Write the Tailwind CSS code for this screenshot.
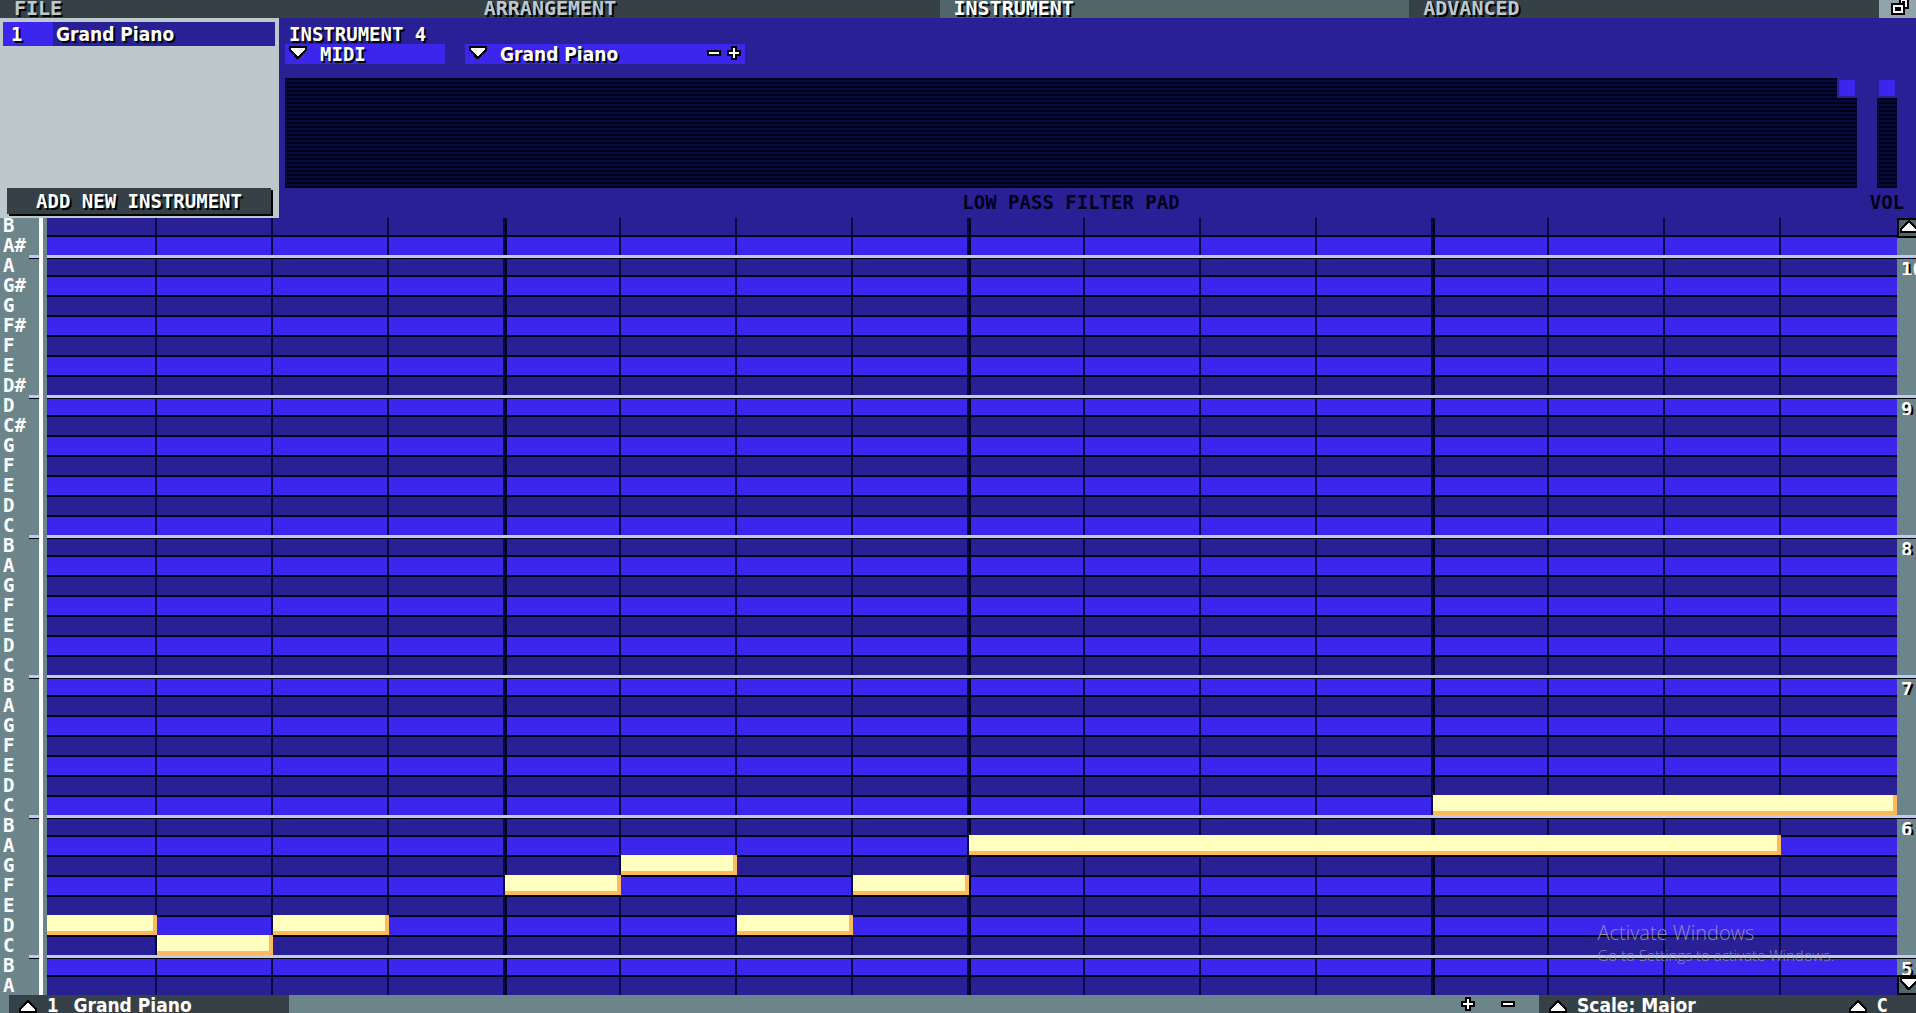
<!DOCTYPE html>
<html lang="en">
<head>
<meta charset="utf-8">
<title>Pattern editor</title>
<script src="https://cdn.jsdelivr.net/npm/@tailwindcss/browser@4"></script>
</head>
<body class="flex h-screen flex-col overflow-hidden bg-[#2a2095] font-['DejaVu_Sans_Mono',monospace] text-[19px] leading-5 font-bold text-white">

<!-- shared pixel icons -->
<svg class="hidden" aria-hidden="true">
  <symbol id="down" viewBox="0 0 18 13"><path d="M0 0h18v5h-1v1h-1v1h-1v1h-1v1h-1v1h-1v1h-1v1h-1v1h-1v1H8v-1H7v-1H6v-1H5V9H4V8H3V7H2V6H1V5H0z" fill="#000"/><path d="M2 2h14v2h-1v1h-1v1h-1v1h-1v1h-1v1h-1v1H8V9H7V8H6V7H5V6H4V5H3V4H2z" fill="#fff"/></symbol>
  <symbol id="up" viewBox="0 0 18 13"><path d="M0 13h18V8h-1V7h-1V6h-1V5h-1V4h-1V3h-1V2h-1V1h-1V0H8v1H7v1H6v1H5v1H4v1H3v1H2v1H1v1H0z" fill="#000"/><path d="M2 11h14V9h-1V8h-1V7h-1V6h-1V5h-1V4h-1V3H8v1H7v1H6v1H5v1H4v1H3v1H2z" fill="#fff"/></symbol>
  <symbol id="minus" viewBox="0 0 14 14"><path d="M0 4h14v6H0z" fill="#000"/><path d="M2 6h10v2H2z" fill="#fff"/></symbol>
  <symbol id="plus" viewBox="0 0 14 14"><path d="M4 0h6v4h4v6h-4v4H4v-4H0V4h4z" fill="#000"/><path d="M6 2h2v4h4v2H8v4H6V8H2V6h4z" fill="#fff"/></symbol>
</svg>

<nav class="flex h-[18px] shrink-0 bg-[#354146] text-xl leading-4 text-[#bdc8cd] text-shadow-[2px_2px_0_#000]">
  <a href="#file" class="flex-1 pl-3.5">FILE</a>
  <a href="#arrangement" class="flex-1 pl-3.5">ARRANGEMENT</a>
  <a href="#instrument" class="flex-1 bg-[#50666b] pl-3.5 text-white">INSTRUMENT</a>
  <a href="#advanced" class="flex-1 pl-3.5">ADVANCED</a>
  <button class="flex w-[37px] justify-center bg-[#91a3ab] pl-1" aria-label="Toggle window">
    <svg class="h-[15px] w-[18px]" viewBox="0 0 18 15"><path d="M8 0h10v9h-4v6H0V3h8z" fill="#000"/><path d="M10 0h6v7h-2V3h-4zM2 5h10v8H2z" fill="#fff"/><path d="M4 7h6v4H4zM11 1h3v2h-3z" fill="#000"/></svg>
  </button>
</nav>

<section class="flex h-[200px] shrink-0">
  <aside class="flex w-[279px] shrink-0 flex-col bg-[#bdc8cd] px-[3px] pt-1 pb-1">
    <button class="flex h-6 w-[272px] shrink-0 items-center bg-[#2a2095] text-left text-shadow-[2px_2px_0_#000]">
      <span class="h-6 w-[50px] bg-[#3c26ed] pl-2 leading-6">1</span>
      <span class="pl-[3px] font-['DejaVu_Sans_Condensed',sans-serif] leading-6">Grand Piano</span>
    </button>
    <button class="mt-auto ml-1 h-[26px] w-[264px] bg-[#354146] leading-6 shadow-[2px_2px_0_#000] text-shadow-[2px_2px_0_#000]">ADD NEW INSTRUMENT</button>
  </aside>

  <div class="flex min-w-0 flex-1 flex-col pt-1.5 pr-[11px] pl-1.5">
    <h1 class="h-5 pl-1 text-shadow-[2px_2px_0_#000]">INSTRUMENT 4</h1>
    <div class="flex h-5 gap-5 text-shadow-[2px_2px_0_#000]">
      <label class="relative w-40 bg-[#3c26ed]">
        <select aria-label="Type" class="h-5 w-full appearance-none pl-[35px] text-shadow-[2px_2px_0_#000]"><option>MIDI</option></select>
        <svg class="pointer-events-none absolute top-0.5 left-1 h-[13px] w-[18px]"><use href="#down"/></svg>
      </label>
      <div class="flex w-[280px] bg-[#3c26ed]">
        <label class="relative flex-1">
          <select aria-label="Patch" class="h-5 w-full appearance-none pl-[35px] font-['DejaVu_Sans_Condensed',sans-serif] text-shadow-[2px_2px_0_#000]"><option>Grand Piano</option></select>
          <svg class="pointer-events-none absolute top-0.5 left-1 h-[13px] w-[18px]"><use href="#down"/></svg>
        </label>
        <div class="flex gap-1.5 pt-0.5 pr-1">
          <button aria-label="Previous patch" class="h-3.5"><svg class="h-3.5 w-3.5"><use href="#minus"/></svg></button>
          <button aria-label="Next patch" class="h-3.5"><svg class="h-3.5 w-3.5"><use href="#plus"/></svg></button>
        </div>
      </div>
    </div>
    <div class="mt-3.5 flex gap-5 pr-2 text-center text-[#01021a]">
      <div class="min-w-0 flex-1">
        <div class="flex h-[110px] justify-end bg-[repeating-linear-gradient(#01021a_0_2px,#050a3c_2px_4px)]">
          <div class="h-5 w-5 border-2 border-[#2a2095] bg-[#3c26ed]"></div>
        </div>
        <p class="pt-1">LOW PASS FILTER PAD</p>
      </div>
      <div class="flex w-5 flex-col items-center">
        <div class="h-[110px] w-5 bg-[repeating-linear-gradient(#01021a_0_2px,#050a3c_2px_4px)]">
          <div class="h-5 w-5 border-2 border-[#2a2095] bg-[#3c26ed]"></div>
        </div>
        <p class="pt-1">VOL</p>
      </div>
    </div>
  </div>
</section>

<main class="relative flex min-h-0 flex-1 flex-col justify-end overflow-hidden">
  <div id="roll"></div>
  <button aria-label="Scroll up" class="absolute top-0 right-0 flex h-5 w-[19px] justify-start overflow-hidden border-2 border-r-0 border-black bg-[#50666b] pl-px"><svg class="h-[13px] w-[18px] shrink-0"><use href="#up"/></svg></button>
  <button aria-label="Scroll down" class="absolute right-0 bottom-0 flex h-5 w-[19px] justify-start overflow-hidden border-2 border-r-0 border-black bg-[#50666b] pl-px"><svg class="h-[13px] w-[18px] shrink-0"><use href="#down"/></svg></button>
  <div class="pointer-events-none absolute right-[82px] bottom-[30px] font-['Open_Sans',sans-serif] font-light text-[#a0a0a8]/85">
    <p class="text-xl leading-6">Activate Windows</p>
    <p class="text-[15px] leading-5">Go to Settings to activate Windows.</p>
  </div>
</main>

<footer class="flex h-[18px] shrink-0 overflow-hidden bg-[#6b858b] pl-[9px] text-shadow-[2px_2px_0_#000]">
  <button class="flex w-[280px] bg-[#354146] pl-2.5">
    <svg class="mt-[5px] h-[13px] w-[18px]"><use href="#up"/></svg>
    <span class="pl-2.5">1</span>
    <span class="pl-[15px] font-['DejaVu_Sans_Condensed',sans-serif]">Grand Piano</span>
  </button>
  <div class="ml-auto flex gap-[26px] pt-0.5 pr-6">
    <button aria-label="Zoom in" class="h-3.5"><svg class="h-3.5 w-3.5"><use href="#plus"/></svg></button>
    <button aria-label="Zoom out" class="h-3.5"><svg class="h-3.5 w-3.5"><use href="#minus"/></svg></button>
  </div>
  <div class="flex w-[377px] justify-between bg-[#354146] pr-7 pl-2.5">
    <button class="flex gap-2.5 font-['DejaVu_Sans_Condensed',sans-serif]"><svg class="mt-[5px] h-[13px] w-[18px]"><use href="#up"/></svg>Scale: Major</button>
    <button class="flex gap-2.5"><svg class="mt-[5px] h-[13px] w-[18px]"><use href="#up"/></svg>C</button>
  </div>
</footer>

<script>
const keys = ['B','A#','A','G#','G','F#','F','E','D#','D','C#','G','F','E','D','C',
  'B','A','G','F','E','D','C','B','A','G','F','E','D','C','B','A','G','F','E','D','C','B','A'];
const octaves = {2: 10, 9: 9, 16: 8, 23: 7, 30: 6, 37: 5};
// row index -> list of [first step, length in steps]
const notes = {29: [[12, 4]], 31: [[8, 7]], 32: [[5, 1]], 33: [[4, 1], [7, 1]], 35: [[0, 1], [2, 1], [6, 1]], 36: [[1, 1]]};

document.getElementById('roll').innerHTML = keys.map((key, row) => {
  const oct = octaves[row];
  const rule = 'h-1 border-t-3 border-[#b9caff] bg-black';
  let cells = '';
  for (let step = 0; step < 16; step++) {
    cells += `<i class="row-start-1 ${step < 15 ? 'border-r-2 border-[#070b45]' : ''}" style="grid-column:${step + 1}">${
      step && step % 4 === 0 ? '<b class="block h-5 w-0.5 bg-[#01021a]"></b>' : ''}</i>`;
  }
  const bars = (notes[row] || []).map(([at, len]) =>
    `<i class="row-start-1 z-10 border-r-4 border-b-4 border-[#ffb85c] bg-[#ffffbf]" style="grid-column:${at + 1} / span ${len}"></i>`).join('');
  return `<div class="flex h-5">
    <div class="flex w-[47px] bg-[#6b858b]">
      <span class="w-[29px] pl-[3px]">${key}</span>
      <span class="w-2.5">${oct ? `<i class="block ${rule}"></i>` : ''}</span>
      <span class="w-1 bg-white"></span>
    </div>
    <div class="relative grid flex-1 grid-cols-[110fr_repeat(15,116fr)] ${row % 2 ? 'bg-[#3c26ed]' : 'bg-[#2a2095]'}">
      <i class="absolute inset-x-0 top-0 ${oct ? rule : 'h-0.5 bg-[#01021a]'}"></i>${cells}${bars}
    </div>
    <div class="w-[19px] bg-[#6b858b]">${oct
      ? `<i class="block ${rule}"></i><b class="block h-4 overflow-hidden pl-1 text-shadow-[2px_2px_0_#000]">${oct}</b>` : ''}</div>
  </div>`;
}).join('');
</script>
</body>
</html>
